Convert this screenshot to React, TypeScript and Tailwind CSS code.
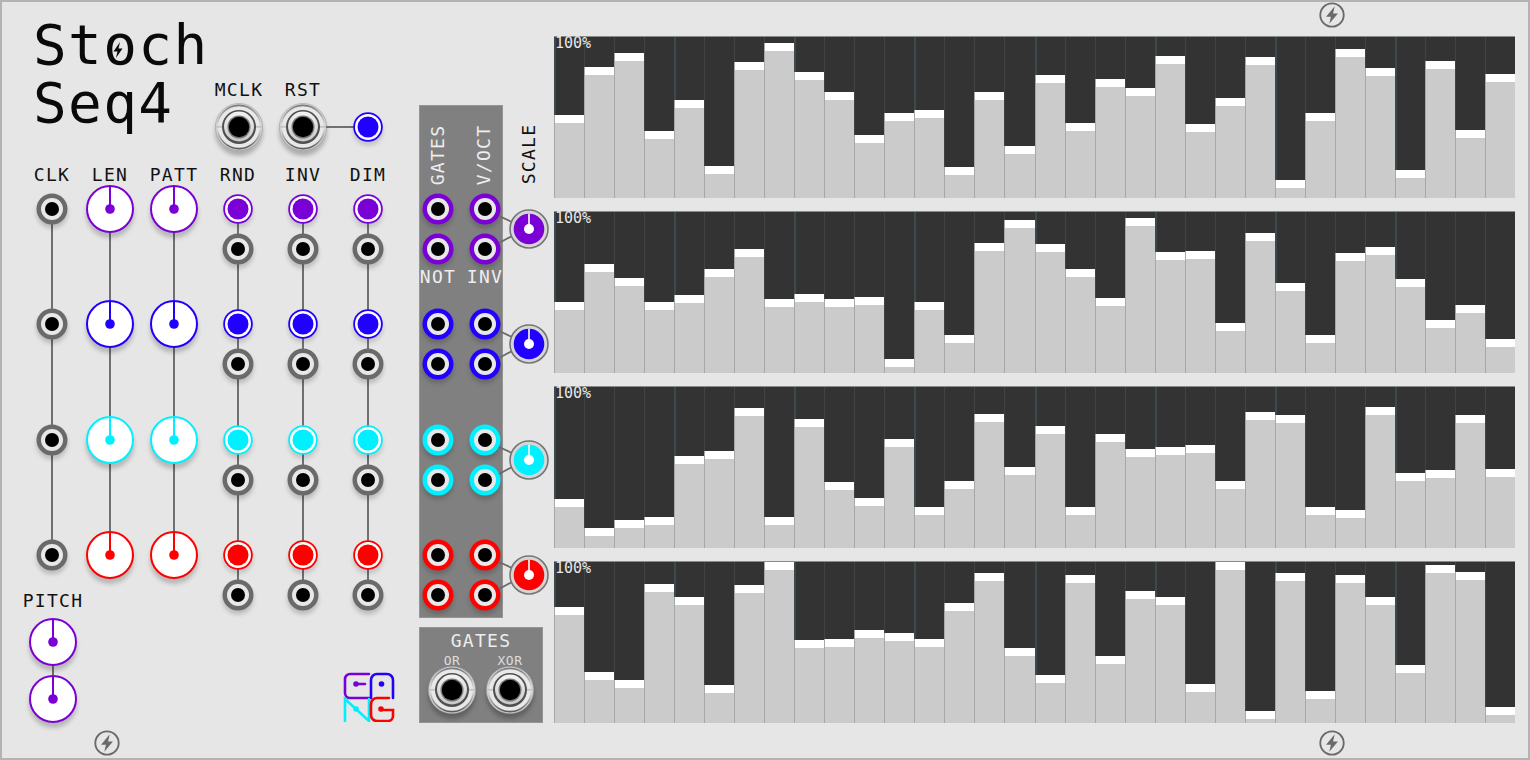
import React from "react";

type C = "purple" | "blue" | "cyan" | "red";
const HEX: Record<C, string> = { purple: "#7a00d6", blue: "#2200ff", cyan: "#00f0ff", red: "#ff0000" };
const COLORS: C[] = ["purple", "blue", "cyan", "red"];
const GREY = "#6a6a6a";

const TOPS = [
  [115,67,53,131,100,166,62,43,72,92,135,113,110,167,92,146,75,123,79,88,56,124,98,57,180,113,49,68,170,61,130,74],
  [302,264,278,302,295,269,249,299,294,299,297,359,302,335,243,220,244,269,298,218,252,251,323,233,283,335,253,247,279,320,305,339],
  [499,528,520,517,456,451,408,517,419,482,498,439,507,481,414,467,426,507,434,449,447,445,481,412,415,507,510,407,473,470,415,469],
  [607,672,680,584,597,685,585,562,640,639,630,633,639,603,573,648,675,575,656,591,597,684,562,711,573,691,575,597,665,565,572,707],
];
const ROW_TOPS = [37, 212, 387, 562];

function Port({ color = GREY }: { color?: string }) {
  return (
    <svg width="32" height="32" viewBox="0 0 32 32" className="relative block overflow-visible drop-shadow-[0_4px_2px_rgba(0,0,0,0.18)]">
      <circle cx="16" cy="16" r="15.5" fill={color} />
      <circle cx="16" cy="16" r="11" fill="#e8e8e8" />
      <circle cx="16" cy="16" r="7" fill="#000" />
    </svg>
  );
}

function Light({ color }: { color: string }) {
  return (
    <svg width="30" height="30" viewBox="0 0 30 30" className="relative block overflow-visible drop-shadow-[0_4px_2px_rgba(0,0,0,0.15)]">
      <circle cx="15" cy="15" r="14.8" fill={color} />
      <circle cx="15" cy="15" r="13" fill="#fff" />
      <circle cx="15" cy="15" r="10.5" fill={color} />
    </svg>
  );
}

function Knob({ color }: { color: string }) {
  return (
    <svg width="48" height="48" viewBox="0 0 48 48" className="relative block overflow-visible drop-shadow-[0_5px_2px_rgba(0,0,0,0.2)]">
      <circle cx="24" cy="24" r="23" fill="#fff" stroke={color} strokeWidth="2" />
      <line x1="24" y1="1" x2="24" y2="24" stroke={color} strokeWidth="2" />
      <circle cx="24" cy="24" r="4.8" fill={color} />
    </svg>
  );
}

function ScaleKnob({ color }: { color: string }) {
  return (
    <svg width="40" height="40" viewBox="0 0 40 40" className="block">
      <circle cx="20" cy="20" r="19" fill="#d6d6d6" stroke="#757575" strokeWidth="1.6" />
      <circle cx="20" cy="20" r="15.3" fill={color} />
      <line x1="20" y1="4.700" x2="20" y2="20" stroke="#fff" strokeWidth="1.6" />
      <circle cx="20" cy="20" r="5" fill="#fff" />
    </svg>
  );
}

function Jack() {
  return (
    <svg width="48" height="48" viewBox="0 0 48 48" className="relative block overflow-visible drop-shadow-[0_5px_2px_rgba(0,0,0,0.25)]">
      <defs>
        <linearGradient id="jackOuter" x1="0" y1="0" x2="0" y2="1">
          <stop offset="0" stopColor="#7c7c7c" />
          <stop offset="0.5" stopColor="#e4e4e4" />
          <stop offset="1" stopColor="#5c5c5c" />
        </linearGradient>
        <linearGradient id="jackRing" x1="0" y1="0" x2="0" y2="1">
          <stop offset="0" stopColor="#f4f4f4" />
          <stop offset="1" stopColor="#c8c8c8" />
        </linearGradient>
      </defs>
      <circle cx="24" cy="24" r="23.6" fill="#d2d2d2" stroke="#a0a0a0" strokeWidth="0.6" />
      <circle cx="24" cy="24" r="21.6" fill="#e8e8e8" stroke="url(#jackOuter)" strokeWidth="1.600" />
      <rect x="1" y="22.800" width="46" height="2" fill="#c6c6c6" />
      <circle cx="24" cy="24" r="17" fill="#505050" />
      <circle cx="24" cy="23.500" r="15" fill="url(#jackRing)" />
      <circle cx="24" cy="24" r="11.500" fill="#777" />
      <circle cx="24" cy="24" r="10.200" fill="#000" />
    </svg>
  );
}

function Bolt({ size = 26, color = "#6a6a6a" }: { size?: number; color?: string }) {
  return (
    <svg width={size} height={size} viewBox="0 0 24 24" className="block">
      <circle cx="12" cy="12" r="10.800" fill="none" stroke={color} strokeWidth="1.700" />
      <path d="M14.500 4 6.500 13.500h4.500L9.500 20l8-9.500H13z" fill={color} />
    </svg>
  );
}

function Logo() {
  return (
    <svg width="52" height="50" viewBox="0 0 52 50" className="block" fill="none" strokeWidth="2.600" strokeLinecap="round">
      <path d="M26 2H7a5 5 0 0 0-5 5v14a5 5 0 0 0 5 5h19" stroke={HEX.purple} />
      <path d="M13 12h9" stroke={HEX.purple} />
      <circle cx="13" cy="12" r="2.800" fill={HEX.purple} />
      <path d="M28 26V8a6 6 0 0 1 6-6h10a6 6 0 0 1 6 6v18" stroke={HEX.blue} />
      <circle cx="38.500" cy="12" r="2.800" fill={HEX.blue} />
      <path d="M2 49V27l24 22V27" stroke={HEX.cyan} />
      <circle cx="13" cy="37" r="2.800" fill={HEX.cyan} />
      <path d="M46 26H34a6 6 0 0 0-6 6v11a6 6 0 0 0 6 6h11a5 5 0 0 0 5-5v-6H38" stroke={HEX.red} />
      <circle cx="38" cy="37" r="2.800" fill={HEX.red} />
    </svg>
  );
}

const labelCls = "text-[18px] leading-[22px] tracking-[1.3px] text-[#111] whitespace-nowrap";

function Column({ label, children, ml }: { label: string; children: React.ReactNode; ml: string }) {
  return (
    <div className={`relative flex w-[48px] flex-col items-center ${ml}`}>
      <div className={`${labelCls} -mb-[1px] h-[22px]`}>{label}</div>
      {children}
    </div>
  );
}

function Wire({ cls }: { cls: string }) {
  return <div className={`absolute left-1/2 w-[2px] -translate-x-1/2 bg-[#707070] ${cls}`} />;
}

function Cell({ children }: { children: React.ReactNode }) {
  return <div className="flex h-[115.33px] flex-col items-center">{children}</div>;
}

function Slot({ children }: { children: React.ReactNode }) {
  return <div className="flex h-[48px] items-center justify-center">{children}</div>;
}

function LeftSection() {
  return (
    <div className="flex w-[417px] shrink-0 flex-col">
      <div className="flex h-[162px] shrink-0 items-start">
        <div className="ml-[31px] mt-[15px] w-[179px] text-[56px] leading-[56px] tracking-[1.4px] text-[#0a0a0a]">
          <div className="relative">
            Stoch
            <div className="absolute left-[78px] top-[24px]">
              <svg width="14" height="18" viewBox="0 0 14 18" className="block">
                <path d="M9 1 2.500 10.500h4L5 17 11.500 7.500h-4z" fill="#0a0a0a" />
              </svg>
            </div>
          </div>
          <div className="mt-[2px]">Seq4</div>
        </div>
        <div className="ml-[3px] mt-[77px] flex items-start">
          <div className="flex w-[48px] flex-col items-center">
            <div className={`${labelCls} mb-[2px]`}>MCLK</div>
            <Jack />
          </div>
          <div className="relative ml-[16px] flex w-[48px] flex-col items-center">
            <div className={`${labelCls} mb-[2px]`}>RST</div>
            <Jack />
            <div className="absolute left-[47px] top-[47px] h-[2px] w-[28px] bg-[#707070]" />
          </div>
          <div className="ml-[26px] mt-[33px]">
            <Light color={HEX.blue} />
          </div>
        </div>
      </div>
      <div className="flex shrink-0">
        <Column label="CLK" ml="ml-[26px]">
          <Wire cls="top-[45px] h-[346px]" />
          {COLORS.map((c) => (
            <Cell key={c}><Slot><Port /></Slot></Cell>
          ))}
        </Column>
        {["LEN", "PATT"].map((name, i) => (
          <Column key={name} label={name} ml={i === 0 ? "ml-[10px]" : "ml-[16px]"}>
            <Wire cls="top-[45px] h-[346px]" />
            {COLORS.map((c) => (
              <Cell key={c}><Slot><Knob color={HEX[c]} /></Slot></Cell>
            ))}
          </Column>
        ))}
        {["RND", "INV", "DIM"].map((name, i) => (
          <Column key={name} label={name} ml={i === 0 ? "ml-[16px]" : "ml-[17px]"}>
            <Wire cls="top-[45px] h-[386px]" />
            {COLORS.map((c) => (
              <Cell key={c}>
                <Slot><Light color={HEX[c]} /></Slot>
                <Port />
              </Cell>
            ))}
          </Column>
        ))}
      </div>
      <div className="-mt-[56px] flex shrink-0 items-start">
        <div className="relative ml-[27px] flex w-[48px] flex-col items-center">
          <div className={`${labelCls} mb-[6px]`}>PITCH</div>
          <Wire cls="top-[52px] h-[57px]" />
          <Knob color={HEX.purple} />
          <div className="mt-[9px]"><Knob color={HEX.purple} /></div>
        </div>
        <div className="ml-[266px] mt-[82px]"><Logo /></div>
      </div>
    </div>
  );
}

function Group({ color, labels }: { color: C; labels?: boolean }) {
  const hex = HEX[color];
  return (
    <div className="relative h-[115.33px]">
      <div className="grid w-[84px] grid-cols-[32px_32px] gap-x-[15px] gap-y-[8px] pl-[2px]">
        <Port color={hex} /><Port color={hex} /><Port color={hex} /><Port color={hex} />
      </div>
      {labels && (
        <div className="mt-[1px] grid w-[84px] grid-cols-[32px_32px] gap-x-[15px] pl-[2px] text-[18px] leading-[22px] tracking-[1.3px] text-[#eee]">
          <span className="justify-self-center">NOT</span>
          <span className="justify-self-center">INV</span>
        </div>
      )}
      <svg width="50" height="72" viewBox="0 0 50 72" className="absolute left-[66px] top-0 overflow-visible">
        <path d="M13 23 26 29M13 50 26 43" stroke="#6a6a6a" strokeWidth="1.800" fill="none" />
      </svg>
      <div className="absolute left-[89px] top-[16px]"><ScaleKnob color={hex} /></div>
    </div>
  );
}

function MiddleSection() {
  return (
    <div className="flex w-[135px] shrink-0 flex-col pt-[103px]">
      <div className="relative">
        <div className="h-[513px] w-[84px] border border-[#959595] bg-[#808080]">
          <div className="flex h-[87px] justify-between pl-[8px] pr-[8px] pt-[18px] text-[18px] leading-[22px] tracking-[1.3px] text-[#eee]">
            <div className="flex h-[62px] w-[20px] items-center justify-center">
              <span className="-rotate-90 whitespace-nowrap">GATES</span>
            </div>
            <div className="flex h-[62px] w-[20px] items-center justify-center">
              <span className="-rotate-90 whitespace-nowrap">V/OCT</span>
            </div>
          </div>
          {COLORS.map((c, i) => (
            <Group key={c} color={c} labels={i === 0} />
          ))}
        </div>
        <div className={`absolute left-[100px] top-[18px] flex h-[62px] w-[20px] items-center justify-center ${labelCls}`}>
          <span className="-rotate-90">SCALE</span>
        </div>
      </div>
      <div className="mt-[9px] flex h-[96px] w-[124px] flex-col items-center border border-[#959595] bg-[#808080] text-[#eee]">
        <div className="mt-[2px] text-[18px] leading-[22px] tracking-[1.3px]">GATES</div>
        <div className="mt-[2px] flex w-full justify-between px-[8px] text-[13px] leading-[14px] tracking-[0.5px] text-[#ddd]">
          <span className="w-[48px] text-center">OR</span>
          <span className="w-[48px] text-center">XOR</span>
        </div>
        <div className="-mt-[2px] flex w-full justify-between px-[8px]">
          <Jack /><Jack />
        </div>
      </div>
    </div>
  );
}

function BarRow({ row }: { row: number }) {
  const base = ROW_TOPS[row];
  return (
    <div className="relative flex h-[161px] w-[961px] bg-[#333] shadow-[0_-1px_0_#8a8a8a]">
      {TOPS[row].map((t, i) => {
        const h = 161 - (t - base);
        return (
          <div key={i} className="flex h-full flex-1 flex-col">
            <div className={i % 4 === 0 ? "flex-1 border-l-[2.5px] border-l-[#3a4a4d]" : "flex-1 border-l-[1px] border-l-[#404544]"} />
            <div className="border-l-[1.5px] border-l-[#a4a9a8] bg-[#cbcbcb]" style={{ height: h }}>
              <div className="h-[8px] bg-white" />
            </div>
          </div>
        );
      })}
      <div className="absolute left-[1px] top-0 text-[15px] leading-[13px] text-[#e8e8e8]">100%</div>
    </div>
  );
}

function BarsSection() {
  return (
    <div className="flex flex-col gap-[14px] pt-[35px]">
      {[0, 1, 2, 3].map((r) => (
        <BarRow key={r} row={r} />
      ))}
    </div>
  );
}

export default function App() {
  return (
    <div
      className="relative flex h-[760px] w-[1530px] overflow-hidden border-2 border-[#b3b3b3] bg-[#e6e6e6]"
      style={{ fontFamily: '"DejaVu Sans Mono", monospace' }}
    >
      <LeftSection />
      <MiddleSection />
      <BarsSection />
      <div className="absolute left-[92px] top-[728px]"><Bolt /></div>
      <div className="absolute left-[1317px] top-0"><Bolt /></div>
      <div className="absolute left-[1317px] top-[728px]"><Bolt /></div>
    </div>
  );
}
